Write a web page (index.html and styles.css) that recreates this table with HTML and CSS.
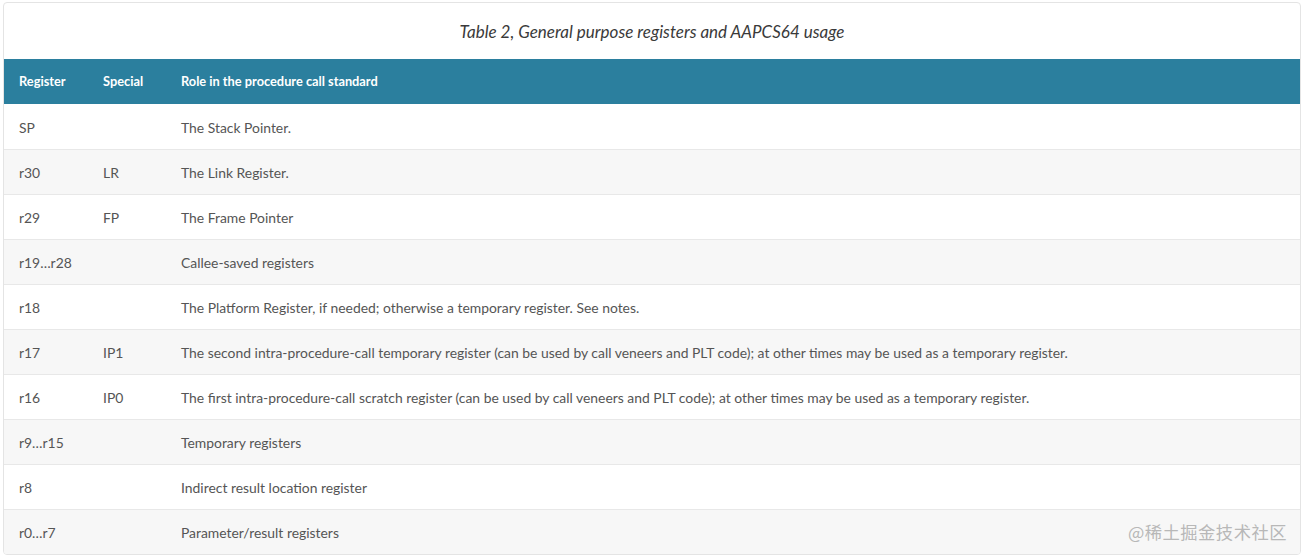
FILE: index.html
```html
<!DOCTYPE html>
<html>
<head>
<meta charset="utf-8">
<link rel="stylesheet" href="styles.css">
</head>
<body>
<div class="page">
  <div class="card">
    <div class="caption">Table 2, General purpose registers and AAPCS64 usage</div>
    <table class="regs">
      <thead>
        <tr><th class="c1">Register</th><th class="c2">Special</th><th>Role in the procedure call standard</th></tr>
      </thead>
      <tbody>
        <tr><td>SP</td><td></td><td>The Stack Pointer.</td></tr>
        <tr><td>r30</td><td>LR</td><td>The Link Register.</td></tr>
        <tr><td>r29</td><td>FP</td><td>The Frame Pointer</td></tr>
        <tr><td>r19…r28</td><td></td><td>Callee-saved registers</td></tr>
        <tr><td>r18</td><td></td><td>The Platform Register, if needed; otherwise a temporary register. See notes.</td></tr>
        <tr><td>r17</td><td>IP1</td><td>The second intra-procedure-call temporary register (can be used by call veneers and PLT code); at other times may be used as a temporary register.</td></tr>
        <tr><td>r16</td><td>IP0</td><td>The first intra-procedure-call scratch register (can be used by call veneers and PLT code); at other times may be used as a temporary register.</td></tr>
        <tr><td>r9…r15</td><td></td><td>Temporary registers</td></tr>
        <tr><td>r8</td><td></td><td>Indirect result location register</td></tr>
        <tr><td>r0…r7</td><td></td><td>Parameter/result registers</td></tr>
      </tbody>
    </table>
    <div class="watermark">@稀土掘金技术社区</div>
  </div>
</div>
</body>
</html>
```

FILE: styles.css
```css
html, body {
  margin: 0;
  padding: 0;
  background: #ffffff;
}
.page {
  padding: 2px 4px 0 3px;
}
.card {
  position: relative;
  border: 1px solid #e4e4e4;
  border-radius: 4px;
  overflow: hidden;
  font-family: Lato, "Open Sans", sans-serif;
}
.caption {
  height: 56px;
  display: flex;
  align-items: center;
  justify-content: center;
  font-style: italic;
  font-size: 17px;
  color: #3a3a3a;
}
.regs {
  width: 100%;
  border-collapse: collapse;
  table-layout: fixed;
}
.regs th {
  background: #2b7f9e;
  color: #ffffff;
  font-weight: bold;
  font-size: 12.8px;
  text-align: left;
  height: 45px;
  padding: 0 0 1px 15px;
  box-sizing: border-box;
}
.regs th.c1 { width: 84px; }
.regs th.c2 { width: 78px; }
.regs td {
  height: 45px;
  box-sizing: border-box;
  padding: 2px 0 0 15px;
  font-size: 13.9px;
  color: #555555;
  border-top: 1px solid #e8e8e8;
  white-space: nowrap;
}
.regs tbody tr:first-child td {
  border-top: none;
}
.regs tbody tr:nth-child(even) td {
  background: #f7f7f7;
}
.watermark {
  position: absolute;
  right: 13px;
  bottom: 10px;
  font-family: "Noto Sans CJK SC", sans-serif;
  font-size: 17.3px;
  color: #b8b8b8;
  letter-spacing: 0.5px;
}
```
